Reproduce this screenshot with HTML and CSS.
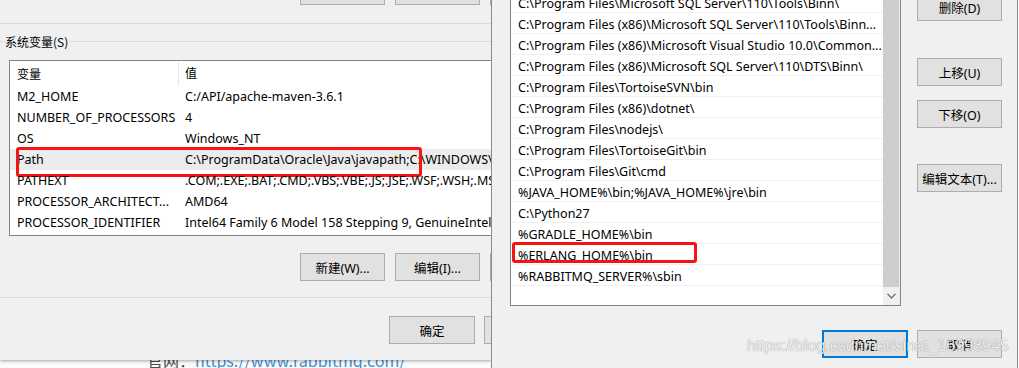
FILE: index.html
```html
<!DOCTYPE html>
<html lang="zh-CN">
<head>
<meta charset="utf-8">
<title>环境变量</title>
<link rel="stylesheet" href="styles.css">
</head>
<body>
<div class="desktop">
  <p class="page-line"><span class="page-label">官网：</span><a class="page-link">https://www.rabbitmq.com/</a></p>
</div>

<section class="win win-env">
  <div class="btn-row top-row">
    <button class="btn">新建(N)...</button>
    <button class="btn">编辑(E)...</button>
    <button class="btn">删除(D)</button>
  </div>
  <div class="sep sep-1"></div>
  <div class="group-head"><span class="group-label">系统变量(S)</span></div>
  <div class="table">
    <div class="trow thead">
      <div class="cell c1">变量</div>
      <div class="cell c2">值</div>
    </div>
    <div class="trow"><div class="cell c1">M2_HOME</div><div class="cell c2">C:/API/apache-maven-3.6.1</div></div>
    <div class="trow"><div class="cell c1">NUMBER_OF_PROCESSORS</div><div class="cell c2">4</div></div>
    <div class="trow"><div class="cell c1">OS</div><div class="cell c2">Windows_NT</div></div>
    <div class="trow selected"><div class="cell c1">Path</div><div class="cell c2">C:\ProgramData\Oracle\Java\javapath;C:\WINDOWS\system32;C:\WINDOWS</div><span class="mark mark-path"></span></div>
    <div class="trow"><div class="cell c1">PATHEXT</div><div class="cell c2">.COM;.EXE;.BAT;.CMD;.VBS;.VBE;.JS;.JSE;.WSF;.WSH;.MSC</div></div>
    <div class="trow"><div class="cell c1">PROCESSOR_ARCHITECT...</div><div class="cell c2">AMD64</div></div>
    <div class="trow"><div class="cell c1">PROCESSOR_IDENTIFIER</div><div class="cell c2">Intel64 Family 6 Model 158 Stepping 9, GenuineIntel</div></div>
  </div>
  <div class="btn-row mid-row">
    <button class="btn">新建(W)...</button>
    <button class="btn">编辑(I)...</button>
    <button class="btn">删除(L)</button>
  </div>
  <div class="sep sep-2"></div>
  <div class="btn-row foot-row">
    <button class="btn btn-wide">确定</button>
    <button class="btn">取消</button>
  </div>
</section>

<section class="win win-path">
  <div class="path-main">
    <div class="listbox">
      <ul class="items">
        <li class="item">C:\Program Files\Microsoft SQL Server\110\Tools\Binn\</li>
        <li class="item">C:\Program Files (x86)\Microsoft SQL Server\110\Tools\Binn...</li>
        <li class="item">C:\Program Files (x86)\Microsoft Visual Studio 10.0\Common...</li>
        <li class="item">C:\Program Files (x86)\Microsoft SQL Server\110\DTS\Binn\</li>
        <li class="item">C:\Program Files\TortoiseSVN\bin</li>
        <li class="item">C:\Program Files (x86)\dotnet\</li>
        <li class="item">C:\Program Files\nodejs\</li>
        <li class="item">C:\Program Files\TortoiseGit\bin</li>
        <li class="item">C:\Program Files\Git\cmd</li>
        <li class="item">%JAVA_HOME%\bin;%JAVA_HOME%\jre\bin</li>
        <li class="item">C:\Python27</li>
        <li class="item">%GRADLE_HOME%\bin</li>
        <li class="item">%ERLANG_HOME%\bin<span class="mark mark-erlang"></span></li>
        <li class="item">%RABBITMQ_SERVER%\sbin</li>
      </ul>
      <div class="scrollbar">
        <div class="thumb"></div>
        <div class="arrow">
          <svg width="9" height="6" viewBox="0 0 9 6"><path d="M0.5 0.8 L4.5 4.8 L8.5 0.8" fill="none" stroke="#606060" stroke-width="1.2"/></svg>
        </div>
      </div>
    </div>
    <div class="side-btns">
      <button class="btn b-del">删除(D)</button>
      <button class="btn b-up">上移(U)</button>
      <button class="btn b-down">下移(O)</button>
      <button class="btn b-text">编辑文本(T)...</button>
    </div>
  </div>
  <div class="btn-row path-foot">
    <button class="btn btn-primary">确定</button>
    <button class="btn">取消</button>
  </div>
</section>

<div class="watermark">https://blog.csdn.net/sinat_16998945</div>
</body>
</html>
```

FILE: styles.css
```css
* { box-sizing: border-box; }
html, body { margin: 0; padding: 0; }
body {
  width: 1019px;
  height: 368px;
  overflow: hidden;
  position: relative;
  background: #fbfbfb;
  font-family: "Noto Sans", "Noto Sans CJK SC", sans-serif;
  font-size: 12.5px;
  color: #000;
}

/* page behind the dialogs */
.desktop {
  height: 368px;
  padding: 350px 0 0 147px;
}
.page-line {
  margin: 0;
  font-size: 16px;
  line-height: 20px;
  white-space: nowrap;
  font-family: "Noto Sans CJK SC", sans-serif;
}
.page-label { color: #4d4d4d; }
.page-link { color: #3f8fd2; }

/* windows */
.win {
  position: absolute;
  top: 0;
  background: #f0f0f0;
  overflow: hidden;
}
.win-env {
  left: 0;
  width: 491px;
  height: 360px;
  box-shadow: 0 1px 3px rgba(0, 0, 0, 0.35);
  display: flex;
  flex-direction: column;
}
.win-path {
  left: 491px;
  width: 527px;
  height: 368px;
  border-left: 1px solid #8a8a8a;
  border-right: 1px solid #8a8a8a;
  display: flex;
  flex-direction: column;
}

/* buttons */
.btn {
  flex: none;
  width: 85px;
  height: 28px;
  margin: 0;
  padding: 0;
  background: #e1e1e1;
  border: 1px solid #adadad;
  font-family: "Noto Sans", "Noto Sans CJK SC", sans-serif;
  font-size: 12.5px;
  color: #000;
  white-space: nowrap;
}
.btn-wide { width: 86px; }
.btn-row {
  display: flex;
  gap: 10px;
  flex: none;
}
.top-row { margin-top: -23px; padding-left: 300px; }
.mid-row { margin-top: 17px; padding-left: 300px; }
.foot-row { margin-top: 18px; padding-left: 389px; gap: 9px; }

.sep { height: 1px; background: #d9d9d9; flex: none; }
.sep-1 { margin-top: 18px; }
.sep-2 { margin-top: 16px; }

/* group header */
.group-head {
  margin-top: 10px;
  height: 16px;
  display: flex;
  align-items: center;
  flex: none;
}
.group-head::before,
.group-head::after {
  content: "";
  height: 1px;
  background: #d9d9d9;
  margin-top: -1px;
}
.group-head::before { width: 5px; }
.group-head::after { flex: 1; }
.group-label {
  font-family: "Noto Sans CJK SC", sans-serif;
  font-size: 12px;
  line-height: 16px;
  color: #000;
  padding-right: 1px;
}

/* table */
.table {
  flex: none;
  margin: 10px 0 0 9px;
  width: 600px;
  height: 176px;
  border: 1px solid #828282;
  background: #fff;
}
.trow {
  display: grid;
  grid-template-columns: 169px 1fr;
  height: 21px;
  line-height: 21px;
  position: relative;
  white-space: nowrap;
}
.thead { height: 25px; line-height: 24px; }
.thead .c1 { border-right: 1px solid #e5e5e5; margin-top: 1px; line-height: 23px; }
.cell { overflow: hidden; }
.c1 { padding-left: 7px; }
.c2 { padding-left: 6px; }
.thead .cell { font-family: "Noto Sans CJK SC", sans-serif; font-size: 12px; }
.selected { background: #ececec; }

/* red annotations */
.mark {
  position: absolute;
  border: 3px solid #f41414;
  border-radius: 3px;
  pointer-events: none;
}
.mark-path { left: 6px; top: -2px; width: 406px; height: 30px; }
.mark-erlang { left: 1px; top: -2px; width: 185px; height: 21px; }

/* path editor */
.path-main {
  display: flex;
  flex: none;
}
.listbox {
  flex: none;
  margin: -9px 0 0 18px;
  width: 391px;
  height: 315px;
  border: 1px solid #828282;
  background: #fff;
  display: flex;
}
.items {
  list-style: none;
  margin: 0;
  padding: 0;
  flex: 1;
}
.item {
  position: relative;
  height: 21px;
  line-height: 20px;
  padding: 2px 0 0 7px;
  border-bottom: 1px solid #f0f0f0;
  white-space: nowrap;
  overflow: visible;
}
.scrollbar {
  width: 17px;
  flex: none;
  display: flex;
  flex-direction: column;
  background: #f0f0f0;
}
.thumb {
  flex: 1;
  margin-right: 1px;
  background: #cdcdcd;
}
.arrow {
  height: 18px;
  display: flex;
  align-items: center;
  justify-content: center;
}
.side-btns {
  display: flex;
  flex-direction: column;
  margin: -7px 0 0 16px;
}
.b-up { margin-top: 37px; }
.b-down { margin-top: 14px; }
.b-text { margin-top: 36px; }
.path-foot {
  margin-top: 24px;
  padding-left: 330px;
  gap: 9px;
}
.btn-primary {
  width: 86px;
  border: 2px solid #0078d7;
}

/* watermark overlay */
.watermark {
  position: absolute;
  left: 747px;
  top: 336px;
  font-family: "Liberation Sans", sans-serif;
  font-size: 16px;
  line-height: 20px;
  color: rgba(255, 255, 255, 0.9);
  text-shadow: 0 0 1px rgba(0, 0, 0, 0.55);
  white-space: nowrap;
  pointer-events: none;
}
```
